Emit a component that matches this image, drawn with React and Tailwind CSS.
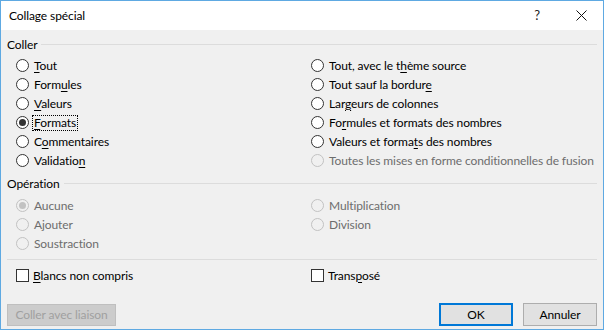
import React from 'react';

const font = { fontFamily: 'Lato, "Noto Sans", sans-serif' };

function Radio({ checked, disabled }) {
  return (
    <span
      className={`flex h-[13px] w-[13px] shrink-0 items-center justify-center rounded-full border ${
        disabled ? 'border-[#c2c2c2] bg-[#f0f0f0]' : 'border-[#333333] bg-white'
      }`}
    >
      {checked && (
        <span className={`h-[7px] w-[7px] rounded-full ${disabled ? 'bg-[#c2c2c2]' : 'bg-[#333333]'}`} />
      )}
    </span>
  );
}

// text with one underlined access-key letter
function Label({ text, u }) {
  if (u === undefined || u < 0) return <span>{text}</span>;
  return (
    <span>
      {text.slice(0, u)}
      <span className="underline decoration-1 underline-offset-2">{text[u]}</span>
      {text.slice(u + 1)}
    </span>
  );
}

function RadioRow({ text, u, checked, disabled, focused }) {
  return (
    <div className={`flex h-[19px] items-center gap-[3px] whitespace-nowrap ${disabled ? 'text-[#6d6d6d]' : 'text-black'}`}>
      <Radio checked={checked} disabled={disabled} />
      <span className={`px-px leading-[14px] ${focused ? 'border border-dotted border-black' : 'border border-transparent'}`}>
        <Label text={text} u={disabled ? undefined : u} />
      </span>
    </div>
  );
}

function CheckRow({ text, u }) {
  return (
    <div className="flex h-[19px] items-center gap-[4px] whitespace-nowrap text-black">
      <span className="h-[13px] w-[13px] shrink-0 border border-[#333333] bg-white" />
      <Label text={text} u={u} />
    </div>
  );
}

function GroupHeader({ title }) {
  return (
    <div className="flex h-[16px] items-center">
      <span className="text-black">{title}</span>
      <span className="ml-[4px] mt-[-1px] h-px flex-1 bg-[#dcdcdc]" />
    </div>
  );
}

const pasteLeft = [
  { text: 'Tout', u: 0 },
  { text: 'Formules', u: 4 },
  { text: 'Valeurs', u: 0 },
  { text: 'Formats', u: 0, checked: true, focused: true },
  { text: 'Commentaires', u: 1 },
  { text: 'Validation', u: 9 },
];

const pasteRight = [
  { text: 'Tout, avec le thème source', u: 15 },
  { text: 'Tout sauf la bordure', u: 19 },
  { text: 'Largeurs de colonnes', u: 3 },
  { text: 'Formules et formats des nombres', u: 2 },
  { text: 'Valeurs et formats des nombres', u: 16 },
  { text: 'Toutes les mises en forme conditionnelles de fusion', disabled: true },
];

export default function App() {
  return (
    <div
      className="flex h-[330px] w-[604px] flex-col border border-[#5ea9e2] bg-[#f0f0f0] text-[12px] tracking-[-0.1px]"
      style={font}
    >
      <div className="flex h-[29px] shrink-0 items-center bg-white pl-[8px] text-black">
        <span className="flex-1">Collage spécial</span>
        <span className="mr-[36px] text-[13px] text-[#222222]">?</span>
        <svg width="11" height="11" viewBox="0 0 11 11" className="mr-[16px]">
          <path d="M0.5 0.5 L10.5 10.5 M10.5 0.5 L0.5 10.5" stroke="#111111" strokeWidth="1" />
        </svg>
      </div>

      <div className="flex flex-1 flex-col px-[6px] pt-[7px]">
        <GroupHeader title="Coller" />
        <div className="mt-[3px] grid grid-cols-[304px_1fr]">
          <div className="flex flex-col pl-[9px]">
            {pasteLeft.map((r) => (
              <RadioRow key={r.text} {...r} />
            ))}
          </div>
          <div className="flex flex-col">
            {pasteRight.map((r) => (
              <RadioRow key={r.text} {...r} />
            ))}
          </div>
        </div>

        <div className="mt-[6px]">
          <GroupHeader title="Opération" />
        </div>
        <div className="mt-[4px] grid grid-cols-[304px_1fr]">
          <div className="flex flex-col pl-[9px]">
            <RadioRow text="Aucune" checked disabled />
            <RadioRow text="Ajouter" disabled />
            <RadioRow text="Soustraction" disabled />
          </div>
          <div className="flex flex-col">
            <RadioRow text="Multiplication" disabled />
            <RadioRow text="Division" disabled />
          </div>
        </div>

        <div className="mt-[6px] h-px bg-[#dcdcdc]" />

        <div className="mt-[6px] grid grid-cols-[304px_1fr]">
          <div className="pl-[9px]">
            <CheckRow text="Blancs non compris" u={0} />
          </div>
          <CheckRow text="Transposé" u={5} />
        </div>

        <div className="mt-[18px] flex items-center">
          <button className="h-[22px] w-[109px] border border-[#bfbfbf] bg-[#cccccc] text-[#a0a0a0]">
            Coller avec liaison
          </button>
          <div className="flex-1" />
          <button className="h-[23px] w-[74px] border-2 border-[#0078d7] bg-[#e1e1e1] text-black">OK</button>
          <button className="ml-[10px] h-[23px] w-[74px] border border-[#adadad] bg-[#e1e1e1] text-black">
            Annuler
          </button>
        </div>
      </div>
    </div>
  );
}
